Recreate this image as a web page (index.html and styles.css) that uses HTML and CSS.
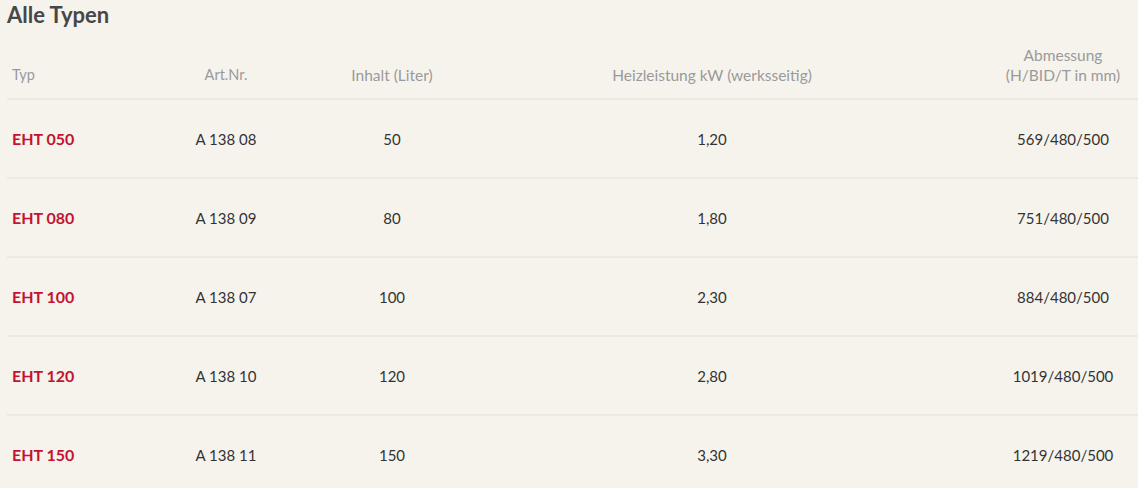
FILE: index.html
```html
<!DOCTYPE html>
<html lang="de">
<head>
<meta charset="utf-8">
<link rel="stylesheet" href="styles.css">
</head>
<body>
<div class="page">
  <h2 class="title">Alle Typen</h2>
  <div class="table">
    <div class="row head">
      <div class="cell c1">Typ</div>
      <div class="cell c2">Art.Nr.</div>
      <div class="cell c3 alt">Inhalt (Liter)</div>
      <div class="cell c4 alt">Heizleistung kW (werksseitig)</div>
      <div class="cell c5 alt">Abmessung<br>(H/BID/T in mm)</div>
    </div>
    <div class="row">
      <div class="cell c1 type">EHT 050</div>
      <div class="cell c2">A 138 08</div>
      <div class="cell c3">50</div>
      <div class="cell c4">1,20</div>
      <div class="cell c5">569/480/500</div>
    </div>
    <div class="row">
      <div class="cell c1 type">EHT 080</div>
      <div class="cell c2">A 138 09</div>
      <div class="cell c3">80</div>
      <div class="cell c4">1,80</div>
      <div class="cell c5">751/480/500</div>
    </div>
    <div class="row">
      <div class="cell c1 type">EHT 100</div>
      <div class="cell c2">A 138 07</div>
      <div class="cell c3">100</div>
      <div class="cell c4">2,30</div>
      <div class="cell c5">884/480/500</div>
    </div>
    <div class="row">
      <div class="cell c1 type">EHT 120</div>
      <div class="cell c2">A 138 10</div>
      <div class="cell c3">120</div>
      <div class="cell c4">2,80</div>
      <div class="cell c5">1019/480/500</div>
    </div>
    <div class="row">
      <div class="cell c1 type">EHT 150</div>
      <div class="cell c2">A 138 11</div>
      <div class="cell c3">150</div>
      <div class="cell c4">3,30</div>
      <div class="cell c5">1219/480/500</div>
    </div>
  </div>
</div>
</body>
</html>
```

FILE: styles.css
```css
html, body {
  margin: 0;
  padding: 0;
  background: #f6f3ed;
  overflow: hidden;
}
body {
  font-family: Lato, "Liberation Sans", sans-serif;
  color: #333;
}
.page {
  padding: 0 0 0 7px;
}
.title {
  margin: 0;
  padding-top: 1px;
  font-size: 22px;
  line-height: 28px;
  font-weight: 700;
  color: #474747;
}
.table {
  width: 1167px;
}
.row {
  display: grid;
  grid-template-columns: 133px 172px 160px 480px 222px;
  height: 77px;
  align-items: center;
  border-top: 2px solid #efe8dc;
  font-size: 15px;
}
.row.head {
  border-top: none;
  height: auto;
  align-items: end;
  padding-top: 16px;
  padding-bottom: 13px;
  color: #9a9a9a;
  font-size: 14.5px;
  line-height: 20px;
}
.alt {
  font-size: 15.5px;
}
.cell {
  text-align: center;
}
.cell.c1 {
  text-align: left;
  padding-left: 5px;
}
.type {
  color: #c41230;
  font-weight: 700;
  font-size: 16px;
}
```
